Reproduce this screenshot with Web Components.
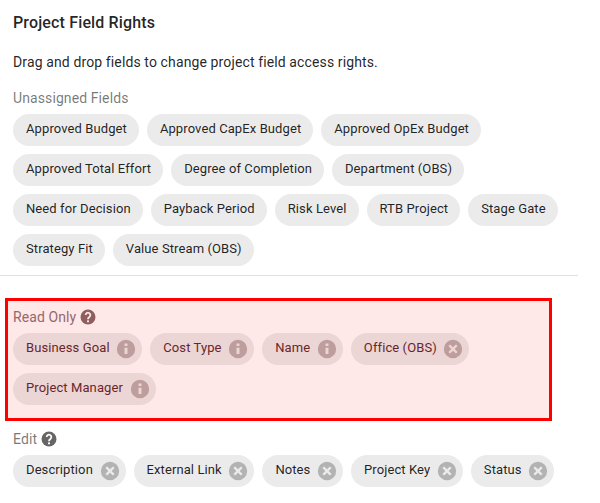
<!DOCTYPE html>
<html>
<head>
<meta charset="utf-8">
<title>Project Field Rights</title>
<style>
  html, body { margin: 0; padding: 0; background: #fff; overflow: hidden; }
  body { font-family: Roboto, "Liberation Sans", sans-serif; }
</style>
</head>
<body>
<rights-panel heading="Project Field Rights" text="Drag and drop fields to change project field access rights.">
  <field-section label="Unassigned Fields" slot="unassigned">
    <field-chip>Approved Budget</field-chip>
    <field-chip>Approved CapEx Budget</field-chip>
    <field-chip>Approved OpEx Budget</field-chip>
    <field-chip>Approved Total Effort</field-chip>
    <field-chip>Degree of Completion</field-chip>
    <field-chip>Department (OBS)</field-chip>
    <field-chip>Need for Decision</field-chip>
    <field-chip>Payback Period</field-chip>
    <field-chip>Risk Level</field-chip>
    <field-chip>RTB Project</field-chip>
    <field-chip>Stage Gate</field-chip>
    <field-chip>Strategy Fit</field-chip>
    <field-chip>Value Stream (OBS)</field-chip>
  </field-section>
  <field-section label="Read Only" help highlighted>
    <field-chip icon="info">Business Goal</field-chip>
    <field-chip icon="info">Cost Type</field-chip>
    <field-chip icon="info">Name</field-chip>
    <field-chip icon="remove">Office (OBS)</field-chip>
    <field-chip icon="info">Project Manager</field-chip>
  </field-section>
  <field-section label="Edit" help>
    <field-chip icon="remove">Description</field-chip>
    <field-chip icon="remove">External Link</field-chip>
    <field-chip icon="remove">Notes</field-chip>
    <field-chip icon="remove">Project Key</field-chip>
    <field-chip icon="remove">Status</field-chip>
  </field-section>
</rights-panel>

<script>
const ICONS = {
  info: '<path d="M12 2a10 10 0 1 0 0 20 10 10 0 0 0 0-20zm1.600 15.500h-3.200v-7h3.200v7zm0-8.700h-3.200V6h3.200v2.800z"/>',
  remove: '<path d="M12 2a10 10 0 1 0 0 20 10 10 0 0 0 0-20zm5 13.200L15.200 17 12 13.800 8.800 17 7 15.200 10.200 12 7 8.800 8.800 7 12 10.200 15.200 7 17 8.800 13.800 12 17 15.200z"/>',
  help: '<circle cx="12" cy="12" r="10"/><path d="M8.900 9.400a3.100 3.100 0 1 1 4.900 2.500c-1.100.8-1.800 1.400-1.800 3" fill="none" stroke="#fff" stroke-width="2.400"/><rect x="10.700" y="16.500" width="2.600" height="2.500" fill="#fff"/>'
};

class FieldChip extends HTMLElement {
  constructor() {
    super();
    this._shadowRoot = this.attachShadow({ mode: 'open' });
  }

  connectedCallback() {
    this.render();
  }

  render() {
    const icon = this.getAttribute('icon');
    this._shadowRoot.innerHTML = `
      <style>
        :host {
          display: inline-flex;
          align-items: flex-start;
          height: 32px;
          border-radius: 16px;
          background-color: #ebebeb;
          color: var(--chip-text, rgba(0, 0, 0, 0.87));
          font-size: 13px;
          line-height: 30px;
          letter-spacing: 0.1px;
          white-space: nowrap;
          cursor: grab;
        }
        span { padding: 0 12px 0 13px; }
        :host([icon]) span { padding-right: 0; }
        svg { width: 22px; height: 22px; margin: 5px 5px 0 5.6px; fill: var(--chip-icon, rgba(0, 0, 0, 0.24)); }
      </style>
      <span><slot></slot></span>
      ${icon ? `<svg viewBox="0 0 24 24">${ICONS[icon]}</svg>` : ''}
    `;
  }
}

class FieldSection extends HTMLElement {
  constructor() {
    super();
    this._shadowRoot = this.attachShadow({ mode: 'open' });
  }

  connectedCallback() {
    this.render();
  }

  render() {
    this._shadowRoot.innerHTML = `
      <style>
        :host {
          display: block;
          position: relative;
          width: 566px;
        }
        .label {
          display: flex;
          align-items: center;
          height: 20px;
          color: rgba(0, 0, 0, 0.54);
          font-size: 14px;
          letter-spacing: 0.1px;
        }
        .label svg { width: 18px; height: 18px; margin-left: 2.5px; fill: rgba(0, 0, 0, 0.6); }
        .chips {
          display: flex;
          flex-wrap: wrap;
          gap: 8px;
          margin-top: 6px;
        }
        :host([highlighted]) {
          --chip-text: #5a2a2f;
          --chip-icon: #b8adad;
        }
        :host([highlighted]) .label { color: #8c7378; }
        :host([highlighted]) .label svg { fill: #846969; }
        /* tint lies over the section, so chips and text take the red too */
        :host([highlighted])::after {
          content: '';
          position: absolute;
          left: -8px;
          top: -9px;
          width: 541px;
          height: 117px;
          border: 3px solid #ff0000;
          background: rgba(255, 0, 0, 0.09);
          pointer-events: none;
        }
      </style>
      <div class="label">
        ${this.getAttribute('label')}
        ${this.hasAttribute('help') ? `<svg viewBox="0 0 24 24">${ICONS.help}</svg>` : ''}
      </div>
      <div class="chips"><slot></slot></div>
    `;
  }
}

class RightsPanel extends HTMLElement {
  constructor() {
    super();
    this._shadowRoot = this.attachShadow({ mode: 'open' });
  }

  connectedCallback() {
    this.render();
  }

  render() {
    this._shadowRoot.innerHTML = `
      <style>
        :host {
          display: block;
          width: 578px;
          color: rgba(0, 0, 0, 0.87);
        }
        h2 {
          margin: 0;
          padding: 13px 0 0 13px;
          height: 19px;
          font-size: 16px;
          line-height: 19px;
          font-weight: 500;
          letter-spacing: 0.15px;
        }
        p {
          margin: 0;
          padding: 20px 0 0 13px;
          font-size: 14px;
          line-height: 20px;
          height: 20px;
          letter-spacing: 0.12px;
        }
        .top { padding: 16px 0 9px 13px; border-bottom: 1px solid #e0e0e0; }
        .rest {
          display: flex;
          flex-direction: column;
          gap: 24px;
          padding: 31px 0 0 13px;
        }
      </style>
      <h2>${this.getAttribute('heading')}</h2>
      <p>${this.getAttribute('text')}</p>
      <div class="top"><slot name="unassigned"></slot></div>
      <div class="rest"><slot></slot></div>
    `;
  }
}

customElements.define('field-chip', FieldChip);
customElements.define('field-section', FieldSection);
customElements.define('rights-panel', RightsPanel);
</script>
</body>
</html>
